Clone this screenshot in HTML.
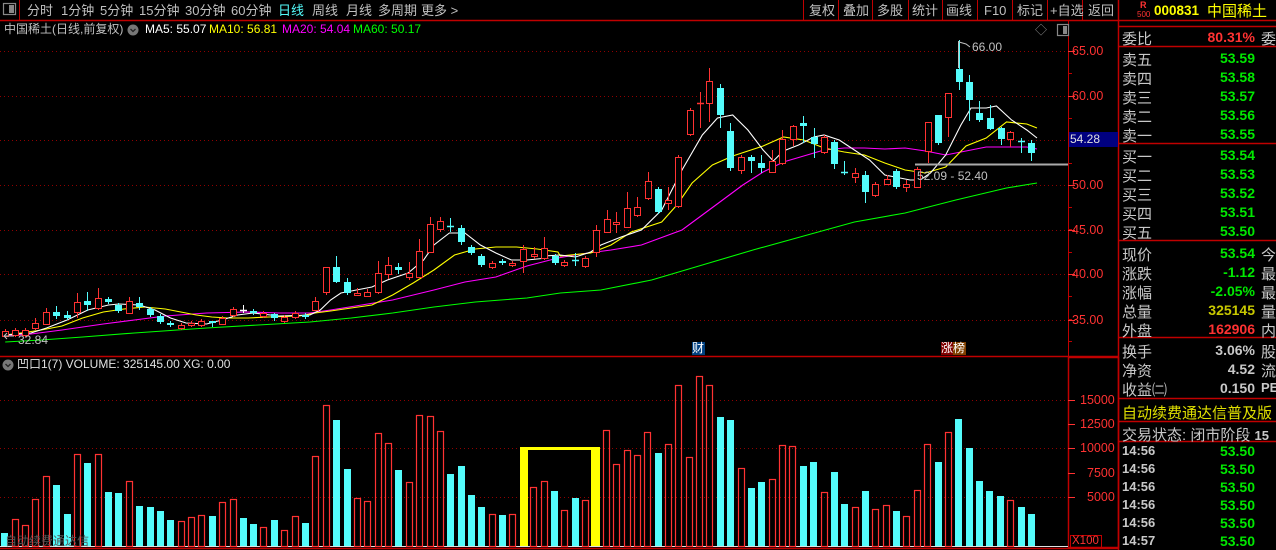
<!DOCTYPE html>
<html><head><meta charset="utf-8">
<style>
*{margin:0;padding:0;box-sizing:border-box}
body{width:1276px;height:550px;background:#000;overflow:hidden;position:relative;font-family:"Liberation Sans","Noto Sans CJK SC",sans-serif;color:#c0c0c0}
.t{position:absolute;white-space:nowrap;line-height:1}
svg{position:absolute;left:0;top:0}
.rp{position:absolute;left:1122px;font-size:15px;color:#c8c8c8}
.rv{position:absolute;right:21px;font-size:14px;font-weight:bold;text-align:right}
.rr{position:absolute;left:1261px;font-size:15px;color:#c8c8c8}
.g{color:#00e800}
</style></head><body>
<svg id="s" width="1276" height="550" xmlns="http://www.w3.org/2000/svg"></svg>

<!-- toolbar -->
<div class="t" style="left:27px;top:4px;font-size:13px">分时</div>
<div class="t" style="left:61px;top:4px;font-size:13px">1分钟</div>
<div class="t" style="left:100px;top:4px;font-size:13px">5分钟</div>
<div class="t" style="left:139px;top:4px;font-size:13px">15分钟</div>
<div class="t" style="left:185px;top:4px;font-size:13px">30分钟</div>
<div class="t" style="left:231px;top:4px;font-size:13px">60分钟</div>
<div class="t" style="left:278px;top:4px;font-size:13px;color:#54fcfc">日线</div>
<div class="t" style="left:312px;top:4px;font-size:13px">周线</div>
<div class="t" style="left:346px;top:4px;font-size:13px">月线</div>
<div class="t" style="left:378px;top:4px;font-size:13px">多周期</div>
<div class="t" style="left:421px;top:4px;font-size:13px">更多 &gt;</div>

<div class="t" style="left:809px;top:4px;font-size:13px">复权</div>
<div class="t" style="left:843px;top:4px;font-size:13px">叠加</div>
<div class="t" style="left:877px;top:4px;font-size:13px">多股</div>
<div class="t" style="left:912px;top:4px;font-size:13px">统计</div>
<div class="t" style="left:946px;top:4px;font-size:13px">画线</div>
<div class="t" style="left:984px;top:4px;font-size:13px">F10</div>
<div class="t" style="left:1017px;top:4px;font-size:13px">标记</div>
<div class="t" style="left:1050px;top:4px;font-size:13px">+自选</div>
<div class="t" style="left:1088px;top:4px;font-size:13px">返回</div>

<!-- title line -->
<div class="t" style="left:4px;top:23px;font-size:12px">中国稀土(日线,前复权)</div>
<div class="t" style="left:145px;top:23px;font-size:12px;color:#fff">MA5: 55.07</div>
<div class="t" style="left:209px;top:23px;font-size:12px;color:#ffff00">MA10: 56.81</div>
<div class="t" style="left:282px;top:23px;font-size:12px;color:#ff00ff">MA20: 54.04</div>
<div class="t" style="left:353px;top:23px;font-size:12px;color:#00ff00">MA60: 50.17</div>
<div class="t" style="left:1035px;top:24px;font-size:12px;color:#888">◇</div>

<!-- price axis labels -->
<div class="t" style="left:1072px;top:45px;font-size:12.5px;color:#ff3232">65.00</div>
<div class="t" style="left:1072px;top:90px;font-size:12.5px;color:#ff3232">60.00</div>
<div class="t" style="left:1072px;top:179px;font-size:12.5px;color:#ff3232">50.00</div>
<div class="t" style="left:1072px;top:224px;font-size:12.5px;color:#ff3232">45.00</div>
<div class="t" style="left:1072px;top:268px;font-size:12.5px;color:#ff3232">40.00</div>
<div class="t" style="left:1072px;top:314px;font-size:12.5px;color:#ff3232">35.00</div>
<div class="t" style="left:1069px;top:132px;width:49px;height:15px;background:#000080;font-size:12px;color:#e0e0e0;padding:1px 0 0 1px">54.28</div>

<div class="t" style="left:972px;top:41px;font-size:12px;color:#c0c0c0">66.00</div>
<div class="t" style="left:917px;top:170px;font-size:12px;color:#c0c0c0">52.09 - 52.40</div>
<div class="t" style="left:18px;top:334px;font-size:12px;color:#c0c0c0">32.84</div>
<div class="t" style="left:692px;top:342px;width:13px;height:13px;background:#004080;font-size:12px;color:#fff">财</div>
<div class="t" style="left:941px;top:342px;width:12px;height:13px;background:#800000;font-size:12px;color:#fff">涨</div>
<div class="t" style="left:953px;top:342px;width:13px;height:13px;background:#804000;font-size:12px;color:#fff">榜</div>

<!-- volume panel -->
<div class="t" style="left:17px;top:358px;font-size:12px;color:#e0e0e0">凹口1(7) VOLUME: 325145.00 XG: 0.00</div>
<div class="t" style="left:1080px;top:394px;font-size:12.5px;color:#ff3232">15000</div>
<div class="t" style="left:1080px;top:418px;font-size:12.5px;color:#ff3232">12500</div>
<div class="t" style="left:1080px;top:442px;font-size:12.5px;color:#ff3232">10000</div>
<div class="t" style="left:1087px;top:467px;font-size:12.5px;color:#ff3232">7500</div>
<div class="t" style="left:1087px;top:491px;font-size:12.5px;color:#ff3232">5000</div>
<div class="t" style="left:1070px;top:535px;width:32px;height:13px;border:1px solid #c00000;font-size:11.5px;color:#ff3232;padding-left:1px">X100</div>
<div class="t" style="left:5px;top:535px;font-size:12px;color:#555">自动续费通达信</div>

<!-- right panel -->
<div class="t" style="left:1140px;top:1px;font-size:9px;color:#ff3232;font-weight:bold">R</div>
<div class="t" style="left:1137px;top:11px;font-size:8px;color:#ff3232">500</div>
<div class="t" style="left:1154px;top:4px;font-size:13.5px;color:#ffff00;font-weight:bold">000831</div>
<div class="t" style="left:1207px;top:4px;font-size:15px;color:#ffff00">中国稀土</div>

<div class="rp" style="top:28px">委比</div><div class="rv" style="top:29px;color:#ff3232">80.31%</div><div class="rr" style="top:28px">委</div>

<div class="rp" style="top:49px">卖五</div><div class="rv g" style="top:50px">53.59</div>
<div class="rp" style="top:68px">卖四</div><div class="rv g" style="top:69px">53.58</div>
<div class="rp" style="top:87px">卖三</div><div class="rv g" style="top:88px">53.57</div>
<div class="rp" style="top:106px">卖二</div><div class="rv g" style="top:107px">53.56</div>
<div class="rp" style="top:125px">卖一</div><div class="rv g" style="top:126px">53.55</div>

<div class="rp" style="top:146px">买一</div><div class="rv g" style="top:147px">53.54</div>
<div class="rp" style="top:165px">买二</div><div class="rv g" style="top:166px">53.53</div>
<div class="rp" style="top:184px">买三</div><div class="rv g" style="top:185px">53.52</div>
<div class="rp" style="top:203px">买四</div><div class="rv g" style="top:204px">53.51</div>
<div class="rp" style="top:222px">买五</div><div class="rv g" style="top:223px">53.50</div>

<div class="rp" style="top:244px">现价</div><div class="rv g" style="top:245px">53.54</div><div class="rr" style="top:244px">今</div>
<div class="rp" style="top:263px">涨跌</div><div class="rv g" style="top:264px">-1.12</div><div class="rr" style="top:263px">最</div>
<div class="rp" style="top:282px">涨幅</div><div class="rv g" style="top:283px">-2.05%</div><div class="rr" style="top:282px">最</div>
<div class="rp" style="top:301px">总量</div><div class="rv" style="top:302px;color:#c8c800">325145</div><div class="rr" style="top:301px">量</div>
<div class="rp" style="top:320px">外盘</div><div class="rv" style="top:321px;color:#ff3232">162906</div><div class="rr" style="top:320px">内</div>

<div class="rp" style="top:341px">换手</div><div class="rv" style="top:342px;color:#c8c8c8">3.06%</div><div class="rr" style="top:341px">股</div>
<div class="rp" style="top:360px">净资</div><div class="rv" style="top:361px;color:#c8c8c8">4.52</div><div class="rr" style="top:360px">流</div>
<div class="rp" style="top:379px">收益㈡</div><div class="rv" style="top:380px;color:#c8c8c8">0.150</div><div class="rr" style="top:380px;font-size:13px;font-weight:bold">PE</div>

<div class="rp" style="top:402px;color:#e0e000;font-size:15px">自动续费通达信普及版</div>
<div class="rp" style="top:424px;font-size:15px">交易状态: 闭市阶段 <b style="font-size:13px">15</b></div>

<div class="rp" style="top:443px;font-size:13px;font-weight:bold">14:56</div><div class="rv g" style="top:443px">53.50</div>
<div class="rp" style="top:461px;font-size:13px;font-weight:bold">14:56</div><div class="rv g" style="top:461px">53.50</div>
<div class="rp" style="top:479px;font-size:13px;font-weight:bold">14:56</div><div class="rv g" style="top:479px">53.50</div>
<div class="rp" style="top:497px;font-size:13px;font-weight:bold">14:56</div><div class="rv g" style="top:497px">53.50</div>
<div class="rp" style="top:515px;font-size:13px;font-weight:bold">14:56</div><div class="rv g" style="top:515px">53.50</div>
<div class="rp" style="top:533px;font-size:13px;font-weight:bold">14:57</div><div class="rv g" style="top:533px">53.50</div>

<script>
var S=document.getElementById('s'),h='';
function L(x1,y1,x2,y2,c,w,d){h+='<line x1="'+x1+'" y1="'+y1+'" x2="'+x2+'" y2="'+y2+'" stroke="'+c+'" stroke-width="'+(w||1)+'"'+(d?' stroke-dasharray="'+d+'"':'')+'/>';}
function R(x,y,w,hh,f,s,sw){h+='<rect x="'+x+'" y="'+y+'" width="'+w+'" height="'+hh+'" fill="'+(f||'none')+'"'+(s?' stroke="'+s+'" stroke-width="'+(sw||1)+'"':'')+'/>';}
var RED='#ff3232',CY='#54fcfc',BR='#c00000',GD='#900000';
// grid
[51,96,140,185,230,274,320].forEach(function(y){L(0,y+.5,1068,y+.5,GD,1,'1,3');});
[400,448,497].forEach(function(y){L(0,y+.5,1068,y+.5,GD,1,'1,3');});
// borders
L(0,20.5,1276,20.5,BR,1.5);
L(19.5,0,19.5,20,BR);
[803,838,872,908,942,977,1012,1047,1082].forEach(function(x){L(x+.5,0,x+.5,20,BR);});
L(1118.5,0,1118.5,550,BR,1.5);
L(1068.5,20,1068.5,356,BR,1);
L(0,356.5,1118,356.5,BR,1.5);
R(1068.5,357.5,50,190,'none',BR,1.5);
L(0,546.5,1068,546.5,'#e0e0e0',1);
L(0,548.5,1118,548.5,BR,1.5);
[26,46,143,240,337,398,421,441].forEach(function(y){L(1118,y+.5,1276,y+.5,BR,1.5);});
// axis ticks
for(var y=51;y<356;y+=22.3){L(1068,Math.round(y)+.5,1072,Math.round(y)+.5,BR);}
[51,96,185,230,274,320].forEach(function(y){L(1068,y+.5,1075,y+.5,RED);});
[400,424,448,473,497].forEach(function(y){L(1068,y+.5,1075,y+.5,RED);});
// icons
R(3.5,3.5,12,11,'none','#888',1.2);R(9,5,5,8,'#888');
R(1057.5,24.5,11,11,'none','#888',1.2);R(1063,26,4,8,'#888');
h+='<circle cx="133" cy="30" r="5.5" fill="#777"/><path d="M130.5 29 L133 31.5 L135.5 29" stroke="#222" fill="none" stroke-width="1.3"/>';
h+='<circle cx="8" cy="365" r="5.5" fill="#777"/><path d="M5.5 364 L8 366.5 L10.5 364" stroke="#222" fill="none" stroke-width="1.3"/>';
// MA lines
function fx(x){return x<=540?x*3/2.904:540+(x-540)*3/2.958;}
function PL(pts,c){var s='';for(var i=0;i<pts.length;i+=2){s+=fx(pts[i]).toFixed(1)+','+pts[i+1]+' ';}h+='<polyline points="'+s+'" fill="none" stroke="'+c+'" stroke-width="1.1"/>';}
PL([5,342,40,340,80,337,130,333,200,328,250,325,300,322,340,318,380,313,420,307,460,302,510,298,560,293,600,290,650,280,700,265,750,250,800,236,850,222,900,213,950,200,1000,188,1030,183],'#00ff00');
PL([5,336,30,334,60,330,100,324,130,320,160,316,200,313,240,312,270,313,300,313,320,310,350,305,380,300,420,290,450,282,480,277,510,266,540,258,580,254,610,250,640,245,680,230,700,215,720,200,740,185,760,172,780,162,800,156,820,150,840,148,860,148,880,149,900,148,920,151,940,155,960,151,980,147,1000,147,1020,147,1030,149],'#ff00ff');
PL([5,335,20,333,40,330,60,326,80,318,100,312,120,309,140,307,160,309,175,312,190,315,205,317,220,318,240,318,260,317,290,316,305,313,320,311,340,308,360,305,380,295,400,283,420,270,440,255,460,249,480,247,500,247,520,249,540,252,560,256,590,253,610,245,630,232,660,222,675,205,690,183,710,165,730,156,760,146,780,137,800,140,820,148,840,152,860,155,880,163,900,170,920,173,940,167,960,146,980,138,1000,122,1020,124,1030,128],'#ffff00');
PL([5,335,30,333,45,328,65,320,85,310,105,305,115,304,135,305,150,310,165,318,180,323,200,324,215,320,230,315,245,313,270,316,300,315,310,310,320,300,330,293,345,290,360,287,375,280,395,273,410,260,420,245,435,233,450,233,465,245,480,253,495,260,510,260,530,258,545,256,560,255,575,257,590,252,600,245,620,237,640,230,660,210,680,170,700,135,715,118,730,115,745,130,760,150,770,161,780,151,795,145,810,137,820,135,835,140,850,150,865,160,880,175,895,178,905,180,915,180,925,173,940,155,955,125,965,108,980,108,990,106,1005,120,1020,130,1030,138],'#ffffff');
// candles
function C(x,c,t,b,wt,wb){wt=wt||t-2;wb=wb||b+2;var col=c=='r'?RED:(c=='w'?'#fff':CY);
 x=Math.round(x);L(x+.5,wt,x+.5,wb,col);
 if(b-t<1.5){L(x-3,t+.5,x+4,t+.5,col,1.5);return;}
 if(c=='r'){R(x-2.5,t+.5,6,b-t,'#000',col,1);}else{R(x-3,t,7,b-t,col);}}
var A=[[15,'r',331,336],[45,'r',330,335],[73,'r',330,335],[102,'r',323,328,318,330],[135,'r',312,324,308,325],[163,'c',312,316,306,319],[195,'c',315,318,311,320],[225,'r',302,312,293,318],[253,'c',301,305,292,311],[285,'r',298,308,288,310],[315,'c',299,302],[343,'c',305,311],[375,'r',301,313,297,313],[405,'c',303,307,297,310],[437,'c',309,315],[465,'c',316,322],[495,'c',323,325,321,327],[527,'r',325,328],[555,'r',323,325],[585,'r',321,325],[617,'c',321,323,321,327],[645,'r',318,324,316,325],[678,'r',309,315],[705,'w',310,311,305,313],[735,'c',311,313,309,315],[765,'r',313,316],[795,'c',314,318,313,321],[825,'r',317,321],[857,'r',313,317],[887,'c',315,317],[915,'r',301,310,297,311],[947,'r',267,292,267,295],[977,'c',267,282,256,283],[1009,'c',282,293,278,295],[1037,'r',293,295,288,296],[1067,'r',292,296,289,297],[1098,'r',273,292,261,294],[1128,'r',265,274,257,279],[1157,'c',267,270,263,274],[1187,'r',273,277,262,280],[1217,'r',251,277,239,278],[1250,'r',224,252,217,253],[1278,'r',221,229,217,232],[1307,'c',226,227,218,232],[1340,'c',228,242,225,245],[1368,'c',247,253,245,255],[1397,'c',256,265,254,267],[1430,'r',263,267],[1458,'c',261,263,259,265],[1488,'r',263,265],[1520,'r',249,261,245,273],[1550,'r',254,256,247,259]];
A.forEach(function(a){C(a[0]/2.904,a[1],a[2],a[3],a[4],a[5]);});
var B=[[13,'r',248,258,237,260],[43,'c',256,263],[70,'r',262,265],[103,'c',260,261,253,266],[133,'r',258,266],[165,'r',230,252,225,257],[197,'r',219,232,210,233],[225,'r',222,224,212,233],[258,'r',208,227,192,227],[288,'r',207,215,197,217],[318,'r',181,198,172,200],[350,'c',189,212],[380,'r',200,203,187,210],[409,'r',157,206],[443,'r',110,134],[472,'r',103,104,92,128],[500,'r',81,103,68,122],[533,'c',88,115,84,128],[563,'c',131,168,123,171],[595,'r',157,170,155,174],[625,'c',157,161,155,173],[655,'c',163,168,155,173],[687,'r',161,172,150,172],[717,'r',139,163,130,165],[747,'r',126,139,125,146],[779,'c',123,126,116,143],[810,'c',137,144,128,158],[840,'r',137,152],[870,'c',142,164,140,169],[900,'c',172,173,161,175],[932,'r',173,177,168,183],[962,'c',175,192,171,203],[992,'r',184,195],[1025,'r',179,184,175,185],[1053,'c',171,187],[1083,'r',184,187,180,192],[1115,'r',169,187,167,187],[1147,'r',122,151,122,163],[1177,'c',115,143,115,145],[1208,'r',93,117,93,137],[1238,'c',69,82,40,90],[1270,'c',82,100,75,121],[1300,'c',113,120,101,122],[1330,'c',118,129,105,130],[1363,'c',128,139,127,145],[1390,'r',132,139,131,147],[1423,'c',141,142,138,153],[1453,'c',143,153,140,161]];
B.forEach(function(a){C(540+a[0]/2.958,a[1],a[2],a[3],a[4],a[5]);});
// annotations
L(958.5,41,958.5,68,'#c0c0c0');h+='<path d="M959 42 L966 44 L970 47" stroke="#c0c0c0" fill="none"/>';
L(915,164.5,1068,164.5,'#aaaaaa',2);
h+='<path d="M4 336 L14 336 M7 333 L4 336 L7 339" stroke="#c0c0c0" fill="none"/>';
// volume
function V(x,t,c){x=Math.round(x);if(c=='r'){R(x-2.5,t+.5,6,546-t,'none',RED,1.2);}else{R(x-3,t,7,546-t,CY);}}
var VA=[[12,533,'c'],[44,519,'r'],[73,525,'r'],[102,499,'r'],[134,476,'r'],[163,485,'c'],[195,514,'c'],[225,454,'r'],[253,463,'c'],[285,454,'r'],[315,492,'c'],[343,493,'c'],[375,481,'r'],[405,506,'c'],[437,507,'c'],[465,511,'c'],[495,520,'c'],[527,521,'r'],[555,517,'r'],[585,515,'r'],[617,516,'c'],[645,502,'r'],[678,499,'r'],[705,518,'c'],[735,524,'c'],[765,527,'r'],[795,520,'c'],[825,530,'r'],[857,516,'r'],[887,523,'c'],[915,456,'r'],[947,405,'r'],[977,420,'c'],[1009,469,'c'],[1037,498,'r'],[1067,501,'r'],[1098,433,'r'],[1128,443,'r'],[1157,470,'c'],[1187,482,'r'],[1217,415,'r'],[1250,416,'r'],[1278,431,'r'],[1307,474,'c'],[1340,466,'c'],[1368,495,'c'],[1397,507,'c'],[1430,514,'r'],[1458,515,'c'],[1488,514,'r']];
VA.forEach(function(a){V(a[0]/2.904,a[1],a[2]);});
var VB=[[9,487,'r'],[42,481,'r'],[71,491,'c'],[100,510,'r'],[132,498,'c'],[160,500,'r'],[222,430,'r'],[251,464,'r'],[283,450,'r'],[311,455,'r'],[341,432,'r'],[372,453,'c'],[401,444,'r'],[431,385,'r'],[462,457,'r'],[492,376,'r'],[521,385,'r'],[553,417,'c'],[582,420,'c'],[614,468,'r'],[643,488,'c'],[672,482,'c'],[704,479,'r'],[733,445,'r'],[762,446,'r'],[794,466,'c'],[823,462,'c'],[855,492,'r'],[884,472,'c'],[913,504,'c'],[945,507,'r'],[974,491,'c'],[1003,509,'r'],[1035,505,'r'],[1064,511,'c'],[1093,516,'r'],[1125,490,'r'],[1154,444,'r'],[1186,462,'c'],[1215,432,'r'],[1244,419,'c'],[1276,448,'c'],[1305,481,'c'],[1334,491,'c'],[1366,496,'c'],[1395,500,'r'],[1427,507,'c'],[1456,514,'c']];
VB.forEach(function(a){V(530+a[0]/2.904,a[1],a[2]);});
// yellow bracket
R(520,449,8,97,'#ffff00');R(520,447,80,3,'#ffff00');R(591,448,9,98,'#ffff00');
S.innerHTML=h;
</script>
</body></html>
